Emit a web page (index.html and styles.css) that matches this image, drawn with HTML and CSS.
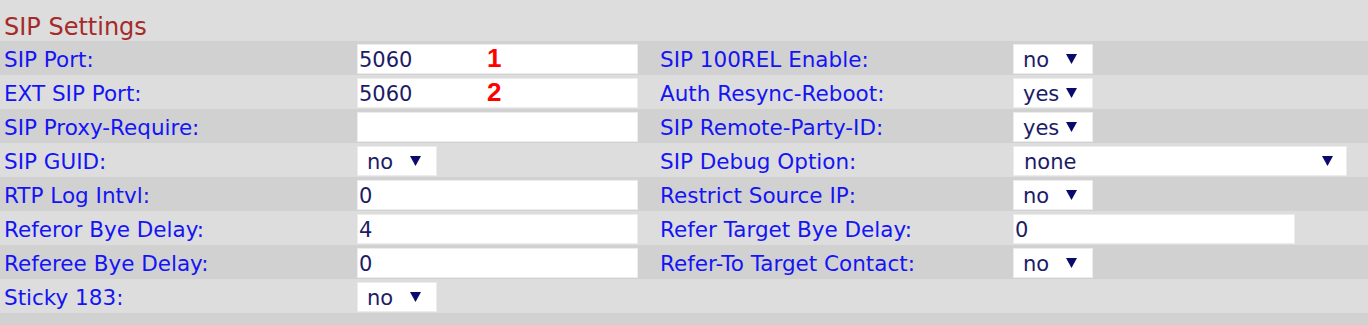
FILE: index.html
```html
<!DOCTYPE html>
<html lang="en">
  <head>
    <meta charset="UTF-8" />
    <meta name="viewport" content="width=device-width, initial-scale=1.0" />
    <title>SIP Settings</title>
    <link rel="stylesheet" href="styles.css">
  </head>
  <body>
    <main class="settings">
      <h2 class="titulo">SIP Settings</h2>

      <div class="grade">
        <div class="linha">
          <div class="rotulo">SIP Port:</div>
          <div class="campo">
            <input class="texto" type="text" value="5060" />
            <span class="marca">1</span>
          </div>
          <div class="rotulo">SIP 100REL Enable:</div>
          <div class="campo">
            <div class="lista curta"><span>no</span><svg width="11" height="10" viewBox="0 0 11 10"><path d="M0 0H11L5.5 10Z" /></svg></div>
          </div>
        </div>

        <div class="linha">
          <div class="rotulo">EXT SIP Port:</div>
          <div class="campo">
            <input class="texto" type="text" value="5060" />
            <span class="marca">2</span>
          </div>
          <div class="rotulo">Auth Resync-Reboot:</div>
          <div class="campo">
            <div class="lista curta"><span>yes</span><svg width="11" height="10" viewBox="0 0 11 10"><path d="M0 0H11L5.5 10Z" /></svg></div>
          </div>
        </div>

        <div class="linha">
          <div class="rotulo">SIP Proxy-Require:</div>
          <div class="campo"><input class="texto" type="text" value="" /></div>
          <div class="rotulo">SIP Remote-Party-ID:</div>
          <div class="campo">
            <div class="lista curta"><span>yes</span><svg width="11" height="10" viewBox="0 0 11 10"><path d="M0 0H11L5.5 10Z" /></svg></div>
          </div>
        </div>

        <div class="linha">
          <div class="rotulo">SIP GUID:</div>
          <div class="campo">
            <div class="lista curta"><span>no</span><svg width="11" height="10" viewBox="0 0 11 10"><path d="M0 0H11L5.5 10Z" /></svg></div>
          </div>
          <div class="rotulo">SIP Debug Option:</div>
          <div class="campo">
            <div class="lista larga"><span>none</span><svg width="11" height="10" viewBox="0 0 11 10"><path d="M0 0H11L5.5 10Z" /></svg></div>
          </div>
        </div>

        <div class="linha">
          <div class="rotulo">RTP Log Intvl:</div>
          <div class="campo"><input class="texto" type="text" value="0" /></div>
          <div class="rotulo">Restrict Source IP:</div>
          <div class="campo">
            <div class="lista curta"><span>no</span><svg width="11" height="10" viewBox="0 0 11 10"><path d="M0 0H11L5.5 10Z" /></svg></div>
          </div>
        </div>

        <div class="linha">
          <div class="rotulo">Referor Bye Delay:</div>
          <div class="campo"><input class="texto" type="text" value="4" /></div>
          <div class="rotulo">Refer Target Bye Delay:</div>
          <div class="campo"><input class="texto" type="text" value="0" /></div>
        </div>

        <div class="linha">
          <div class="rotulo">Referee Bye Delay:</div>
          <div class="campo"><input class="texto" type="text" value="0" /></div>
          <div class="rotulo">Refer-To Target Contact:</div>
          <div class="campo">
            <div class="lista curta"><span>no</span><svg width="11" height="10" viewBox="0 0 11 10"><path d="M0 0H11L5.5 10Z" /></svg></div>
          </div>
        </div>

        <div class="linha">
          <div class="rotulo">Sticky 183:</div>
          <div class="campo">
            <div class="lista curta"><span>no</span><svg width="11" height="10" viewBox="0 0 11 10"><path d="M0 0H11L5.5 10Z" /></svg></div>
          </div>
          <div class="rotulo"></div>
          <div class="campo"></div>
        </div>
      </div>
    </main>
  </body>
</html>
```

FILE: styles.css
```css
* {
  margin: 0;
  padding: 0;
  box-sizing: border-box;
}

body {
  width: 100vw;
  height: 100vh;
  background-color: #d1d1d1;
  font-family: "DejaVu Sans", Verdana, sans-serif;
  overflow: hidden;
}

main.settings {
  width: 100%;
}

h2.titulo {
  height: 41px;
  padding: 0 0 1px 4px;
  display: flex;
  align-items: flex-end;
  background-color: #dddddd;
  color: #a52a2a;
  font-size: 24px;
  font-weight: normal;
  line-height: 26px;
}

div.linha {
  height: 34px;
  display: grid;
  grid-template-columns: 353px 303px 353px 1fr;
  align-items: center;
}

div.linha:nth-child(odd) {
  background-color: #d1d1d1;
}

div.linha:nth-child(even) {
  background-color: #dddddd;
}

div.rotulo {
  padding: 2px 0 0 4px;
  color: #1414f5;
  font-size: 21.5px;
  white-space: nowrap;
}

div.campo {
  position: relative;
  height: 100%;
  padding: 1px 0 0 4px;
  display: flex;
  align-items: center;
}

input.texto {
  width: 281px;
  height: 30px;
  padding: 2px 1px 0;
  border: 1px solid #ececec;
  background-color: #fff;
  color: #1c1c66;
  font-family: "DejaVu Sans", Verdana, sans-serif;
  font-size: 21px;
  outline: none;
}

div.campo:last-child input.texto {
  width: 282px;
}

div.lista {
  height: 30px;
  padding: 2px 15px 0 9px;
  display: flex;
  justify-content: space-between;
  align-items: center;
  background-color: #fff;
  border: 1px solid #ececec;
  color: #1c1c66;
  font-size: 21px;
  cursor: pointer;
}

div.lista svg {
  margin-top: -2px;
  fill: #0a0a6e;
}

div.curta {
  width: 80px;
}

div.larga {
  width: 334px;
  padding-left: 10px;
  padding-right: 13px;
}

span.marca {
  position: absolute;
  left: 134px;
  top: 4px;
  color: #ff0000;
  font-family: "Liberation Sans", Arial, sans-serif;
  font-size: 26px;
  font-weight: bold;
  line-height: 26px;
}
```
